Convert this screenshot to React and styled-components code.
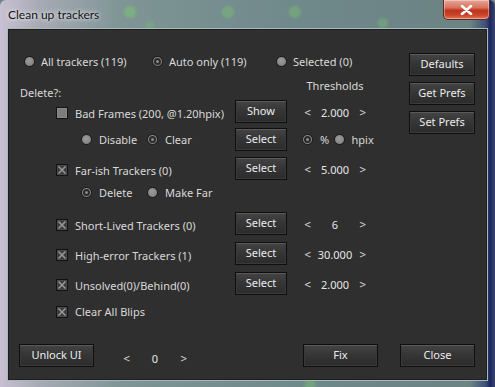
import React from "react";
import styled, { createGlobalStyle, css } from "styled-components";

const Global = createGlobalStyle`
  html, body { margin: 0; padding: 0; background: #6f8786; }
  body { font-family: "Noto Sans", "Lato", sans-serif; }
`;

const Window = styled.div`
  width: 495px;
  height: 387px;
  box-sizing: border-box;
  display: flex;
  flex-direction: column;
  position: relative;
  overflow: hidden;
  background:
    radial-gradient(circle at 130px 12px, rgba(120, 200, 110, 0.5) 0 4px, transparent 8px),
    radial-gradient(circle at 228px 12px, rgba(120, 200, 110, 0.4) 0 4px, transparent 8px),
    radial-gradient(circle at 295px 12px, rgba(120, 200, 110, 0.4) 0 4px, transparent 8px),
    radial-gradient(circle at 383px 23px, rgba(120, 200, 110, 0.35) 0 3px, transparent 7px),
    radial-gradient(circle at 150px 25px, rgba(120, 200, 110, 0.3) 0 2px, transparent 6px),
    radial-gradient(circle at 310px 385px, rgba(120, 200, 110, 0.4) 0 3px, transparent 8px),
    linear-gradient(90deg, #c9c0d3 0px, #a6aab4 40px, #7f9596 120px, #6f8889 300px, #6c8384 470px, #3c4e78 486px, #1b2560 490px, #3a4570 495px);
  border-radius: 6px 6px 0 0;
`;

const TitleBar = styled.div`
  height: 28px;
  display: flex;
  align-items: flex-start;
  justify-content: space-between;
  flex: none;
`;

const Title = styled.div`
  padding: 7px 0 0 8px;
  font-size: 12px;
  line-height: 16px;
  color: #101010;
  font-family: "Lato", sans-serif;
  text-shadow: 0 0 6px rgba(255, 255, 255, 0.8), 0 0 3px rgba(255, 255, 255, 0.7);
`;

const CloseBtn = styled.div`
  width: 47px;
  height: 20px;
  margin-right: 5px;
  box-sizing: border-box;
  border: 1px solid #5a2a28;
  border-top: none;
  border-radius: 0 0 5px 5px;
  background: linear-gradient(180deg, #e8a69a 0%, #d7735f 40%, #c0331c 55%, #c8452c 80%, #e07a55 100%);
  box-shadow: inset 0 0 0 1px rgba(255, 255, 255, 0.35);
  display: flex;
  align-items: center;
  justify-content: center;
`;

const Panel = styled.div`
  flex: 1;
  margin: 0 7px 6px 7px;
  border: 1px solid #aab8b8;
  background: #2f2f2f;
  display: flex;
  flex-direction: column;
  padding: 0 12px 13px 0;
  color: #d9d9d9;
  font-size: 11px;
  box-shadow: inset 0 0 0 1px #1e1e1e;
`;

const Top = styled.div`
  display: flex;
`;

const MainCol = styled.div`
  width: 402px;
  display: flex;
  flex-direction: column;
`;

const SideCol = styled.div`
  margin-top: 24px;
  margin-left: auto;
  display: flex;
  flex-direction: column;
  gap: 6px;
`;

const Button = styled.div`
  width: ${(p) => p.$w || 52}px;
  height: 23px;
  box-sizing: border-box;
  border: 1px solid #0e0e0e;
  background: linear-gradient(180deg, #444 0%, #363636 45%, #2b2b2b 100%);
  box-shadow: inset 0 1px 0 #5a5a5a, inset 0 0 0 1px #3a3a3a;
  color: #ececec;
  font-size: 11px;
  display: flex;
  align-items: center;
  justify-content: center;
  padding-bottom: 2px;
  flex: none;
`;

const RadioRow = styled.div`
  margin-top: 21px;
  height: 22px;
  padding-left: 16px;
  display: grid;
  grid-template-columns: 128px 124px auto;
  align-items: center;
`;

const Item = styled.div`
  display: flex;
  align-items: center;
  gap: ${(p) => p.$gap ?? 6}px;
  white-space: nowrap;
`;

const RadioDot = styled.span`
  width: 11px;
  height: 11px;
  box-sizing: border-box;
  border-radius: 50%;
  border: 1px solid #1a1a1a;
  background: radial-gradient(circle at 45% 40%, #9b9b9b, #7b7b7b);
  position: relative;
  flex: none;
  ${(p) =>
    p.$on &&
    css`
      &::after {
        content: "";
        position: absolute;
        left: 1px;
        top: 1px;
        width: 7px;
        height: 7px;
        box-sizing: border-box;
        border-radius: 50%;
        border: 2px solid #2a2a2a;
        background: #8a8a8a;
      }
    `}
`;

const Box = styled.span`
  width: 12px;
  height: 12px;
  box-sizing: border-box;
  border: 1px solid #121212;
  flex: none;
  display: flex;
  align-items: center;
  justify-content: center;
  background: ${(p) => (p.$on ? "#3b3b3b" : "#7d7d7d")};
  box-shadow: ${(p) => (p.$on ? "inset 0 0 0 1px #4a4a4a" : "inset 0 0 0 1px #8a8a8a")};
`;

const HeaderRow = styled.div`
  margin-top: 4px;
  height: 24px;
  display: grid;
  grid-template-columns: 279px 80px;
  column-gap: 8px;
`;

const DeleteLabel = styled.div`
  padding-left: 12px;
  align-self: end;
  line-height: 14px;
`;

const ThreshHead = styled.div`
  grid-column: 2;
  text-align: center;
  line-height: 20px;
`;

const Row = styled.div`
  margin-top: ${(p) => p.$mt || 0}px;
  height: 22px;
  display: grid;
  grid-template-columns: 219px 52px 80px;
  column-gap: 8px;
  align-items: center;
`;

const LabelCell = styled.div`
  padding-left: ${(p) => p.$indent ?? 48}px;
  padding-top: ${(p) => p.$dy ?? 3}px;
  display: flex;
  align-items: center;
  gap: ${(p) => p.$gap ?? 7}px;
  white-space: nowrap;
`;

const Options = styled.div`
  padding-left: ${(p) => p.$indent ?? 73}px;
  display: flex;
  align-items: center;
`;

const OptionItem = styled(Item)`
  width: ${(p) => p.$w}px;
  gap: 7px;
`;

const SpinWrap = styled.div`
  width: ${(p) => p.$w || 80}px;
  margin-left: ${(p) => p.$ml || 0}px;
  display: flex;
  align-items: center;
  justify-content: space-between;
  padding: ${(p) => p.$pad || "2px 8px 0 8px"};
  box-sizing: border-box;
`;

const Arrow = styled.span`
  font-size: 11px;
  color: #d0d0d0;
  font-family: "DejaVu Sans", sans-serif;
  transform: scaleX(0.8);
`;

const Value = styled.span`
  color: #e6e6e6;
`;

const Bottom = styled.div`
  margin-top: auto;
  padding-left: 11px;
  display: flex;
  align-items: center;
`;

const BottomRight = styled.div`
  margin-left: auto;
  display: flex;
  gap: 22px;
`;

const Radio = ({ on, children, gap }) => (
  <Item $gap={gap}>
    <RadioDot $on={on} />
    <span>{children}</span>
  </Item>
);

const Check = ({ on }) => (
  <Box $on={on}>
    {on && (
      <svg width="8" height="8" viewBox="0 0 8 8">
        <path d="M0.5 0.5 L7.5 7.5 M7.5 0.5 L0.5 7.5" stroke="#9a9a9a" strokeWidth="1.5" />
      </svg>
    )}
  </Box>
);

const Spin = ({ value, w, pad, ml }) => (
  <SpinWrap $w={w} $pad={pad} $ml={ml}>
    <Arrow>&lt;</Arrow>
    <Value>{value}</Value>
    <Arrow>&gt;</Arrow>
  </SpinWrap>
);

const TrackerRow = ({ mt, on, label, button = "Select", value }) => (
  <Row $mt={mt}>
    <LabelCell>
      <Check on={on} />
      <span>{label}</span>
    </LabelCell>
    <Button>{button}</Button>
    {value !== undefined && <Spin value={value} />}
  </Row>
);

export default function App() {
  return (
    <>
      <Global />
      <Window>
        <TitleBar>
          <Title>Clean up trackers</Title>
          <CloseBtn>
            <svg width="13" height="10" viewBox="0 0 13 10">
              <path
                d="M2 1 L11 9 M11 1 L2 9"
                stroke="#fff"
                strokeWidth="2.6"
                strokeLinecap="round"
              />
            </svg>
          </CloseBtn>
        </TitleBar>
        <Panel>
          <Top>
            <MainCol>
              <RadioRow>
                <Radio>All trackers (119)</Radio>
                <Radio on>Auto only (119)</Radio>
                <Radio>Selected (0)</Radio>
              </RadioRow>
              <HeaderRow>
                <DeleteLabel>Delete?:</DeleteLabel>
                <ThreshHead>Thresholds</ThreshHead>
              </HeaderRow>
              <TrackerRow label="Bad Frames (200, @1.20hpix)" button="Show" value="2.000" />
              <Row $mt={6}>
                <Options>
                  <OptionItem $w={66}>
                    <RadioDot />
                    <span>Disable</span>
                  </OptionItem>
                  <OptionItem $w={60}>
                    <RadioDot $on />
                    <span>Clear</span>
                  </OptionItem>
                </Options>
                <Button>Select</Button>
                <Options $indent={7}>
                  <OptionItem $w={38}>
                    <RadioDot $on />
                    <span>%</span>
                  </OptionItem>
                  <OptionItem $w={50}>
                    <RadioDot />
                    <span>hpix</span>
                  </OptionItem>
                </Options>
              </Row>
              <TrackerRow mt={7} on label="Far-ish Trackers (0)" value="5.000" />
              <Row $mt={2}>
                <Options>
                  <OptionItem $w={66}>
                    <RadioDot $on />
                    <span>Delete</span>
                  </OptionItem>
                  <OptionItem $w={80}>
                    <RadioDot />
                    <span>Make Far</span>
                  </OptionItem>
                </Options>
              </Row>
              <TrackerRow mt={9} on label="Short-Lived Trackers (0)" value="6" />
              <TrackerRow mt={8} on label="High-error Trackers (1)" value="30.000" />
              <TrackerRow mt={8} on label="Unsolved(0)/Behind(0)" value="2.000" />
              <Row $mt={6}>
                <LabelCell $dy={1}>
                  <Check on />
                  <span>Clear All Blips</span>
                </LabelCell>
              </Row>
            </MainCol>
            <SideCol>
              <Button $w={66}>Defaults</Button>
              <Button $w={66}>Get Prefs</Button>
              <Button $w={66}>Set Prefs</Button>
            </SideCol>
          </Top>
          <Bottom>
            <Button $w={75}>Unlock UI</Button>
            <Spin value="0" w={66} pad="6px 0 0 0" ml={28} />
            <BottomRight>
              <Button $w={75}>Fix</Button>
              <Button $w={75}>Close</Button>
            </BottomRight>
          </Bottom>
        </Panel>
      </Window>
    </>
  );
}
